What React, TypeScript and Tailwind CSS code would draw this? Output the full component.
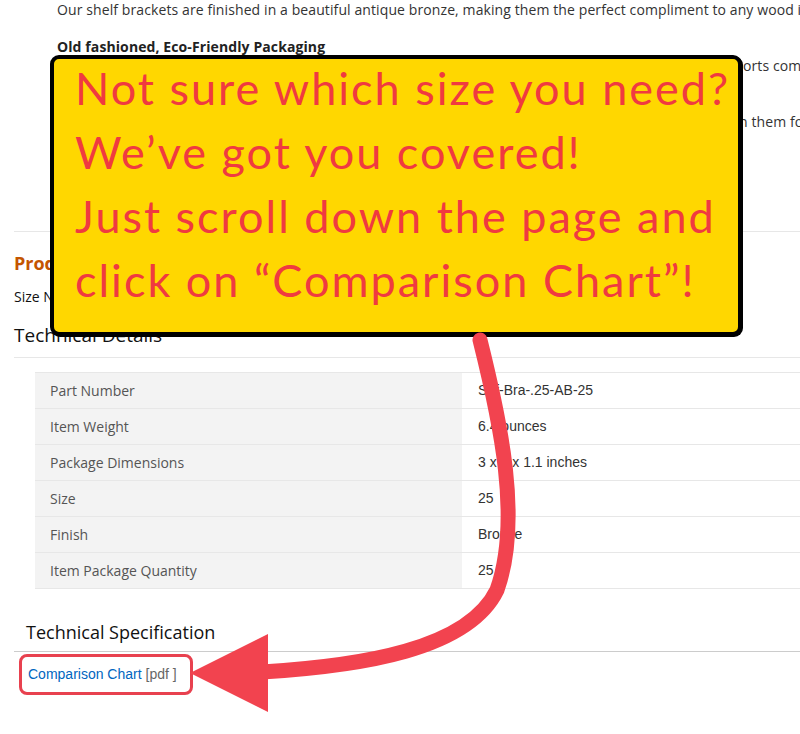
import React from "react";

const rows: [string, string][] = [
  ["Part Number", "Shf-Bra-.25-AB-25"],
  ["Item Weight", "6.4 ounces"],
  ["Package Dimensions", "3 x 3 x 1.1 inches"],
  ["Size", "25"],
  ["Finish", "Bronze"],
  ["Item Package Quantity", "25"],
];

export default function App() {
  return (
    <div className="relative w-[800px] h-[734px] overflow-hidden bg-white font-['Open_Sans',sans-serif]">
      {/* Description text */}
      <div className="pl-[57px] text-[14px] leading-[19px] text-[#333] whitespace-nowrap tracking-[0.1px]">
        <p>
          Our shelf brackets are finished in a beautiful antique bronze, making them the perfect compliment to any wood interior.
        </p>
        <p className="mt-[18px] font-bold text-[#222]">Old fashioned, Eco-Friendly Packaging</p>
        <p className="flex">
          <span className="block shrink-0 w-[686px] overflow-hidden">
            We ship our brackets in simple recycled kraft paper boxes, and the sturdy supp
          </span>
          <span className="shrink-0">orts come wrapped without any plastic.</span>
        </p>
        <p className="mt-[18px] font-bold text-[#222]">Made to Last</p>
        <p className="flex">
          <span className="block shrink-0 w-[682px] overflow-hidden">
            These brackets are built to hold heavy shelves for years, so you can rely o
          </span>
          <span className="shrink-0">n them for every project.</span>
        </p>
      </div>

      <div className="mt-[100px] ml-[14px] h-px bg-[#e7e7e7]" />

      <h2 className="mt-[20px] ml-[14px] h-[22px] leading-[22px] text-[18px] font-bold text-[#c45500]">
        Product description
      </h2>
      <p className="mt-[13px] ml-[14px] h-[20px] leading-[20px] text-[14px] text-[#111]">Size Name: 25</p>
      <h3 className="mt-[16px] ml-[14px] h-[24px] leading-[24px] text-[19px] text-[#111]">Technical Details</h3>
      <div className="mt-[10px] ml-[14px] h-px bg-[#e7e7e7]" />

      {/* Table */}
      <div className="mt-[14px] ml-[35px] w-[800px] border-b border-[#e7e7e7]">
        {rows.map(([k, v]) => (
          <div key={k} className="flex h-[36px] border-t border-[#e7e7e7]">
            <div className="w-[427px] bg-[#f3f3f3] pl-[15px] flex items-center text-[14px] text-[#555]">
              {k}
            </div>
            <div className="flex-1 pl-[16px] flex items-center text-[14px] text-[#333] font-['Liberation_Sans',Arial,sans-serif]">
              {v}
            </div>
          </div>
        ))}
      </div>

      <h3 className="mt-[31px] ml-[26px] h-[24px] leading-[24px] text-[18px] text-[#111]">Technical Specification</h3>
      <div className="mt-[7px] ml-[14px] h-px bg-[#cccccc]" />
      <div className="mt-[2px] ml-[19px] w-[174px] h-[41px] border-[3px] border-[#e8414f] rounded-[8px] flex items-center pl-[6px] text-[14px] font-['Liberation_Sans',Arial,sans-serif]">
        <span className="text-[#0066c0]">Comparison Chart</span>
        <span className="ml-[4px] text-[#666]">[pdf ]</span>
      </div>

      {/* Callout */}
      <div className="absolute left-[50px] top-[55px] w-[692px] h-[281px] bg-[#ffd700] border-[4px] border-black rounded-[9px] pl-[21px] shadow-[1px_1px_0_#000]">
        <div className="-mt-[3px] text-[45px] leading-[64px] tracking-[2px] text-[#f03a40] whitespace-nowrap font-['Lato',sans-serif]">
          <div>Not sure which size you need?</div>
          <div>We’ve got you covered!</div>
          <div>Just scroll down the page and</div>
          <div>click on “Comparison Chart”!</div>
        </div>
      </div>

      {/* Arrow */}
      <svg className="absolute left-0 top-0 pointer-events-none" width="800" height="734" viewBox="0 0 800 734">
        <path
          d="M 480 340 C 500 420, 522 520, 497 590 C 468 650, 360 666, 262 672"
          fill="none"
          stroke="#f2434f"
          strokeWidth="15"
          strokeLinecap="round"
        />
        <polygon points="190,673 268,634 268,712" fill="#f2434f" />
      </svg>
    </div>
  );
}
